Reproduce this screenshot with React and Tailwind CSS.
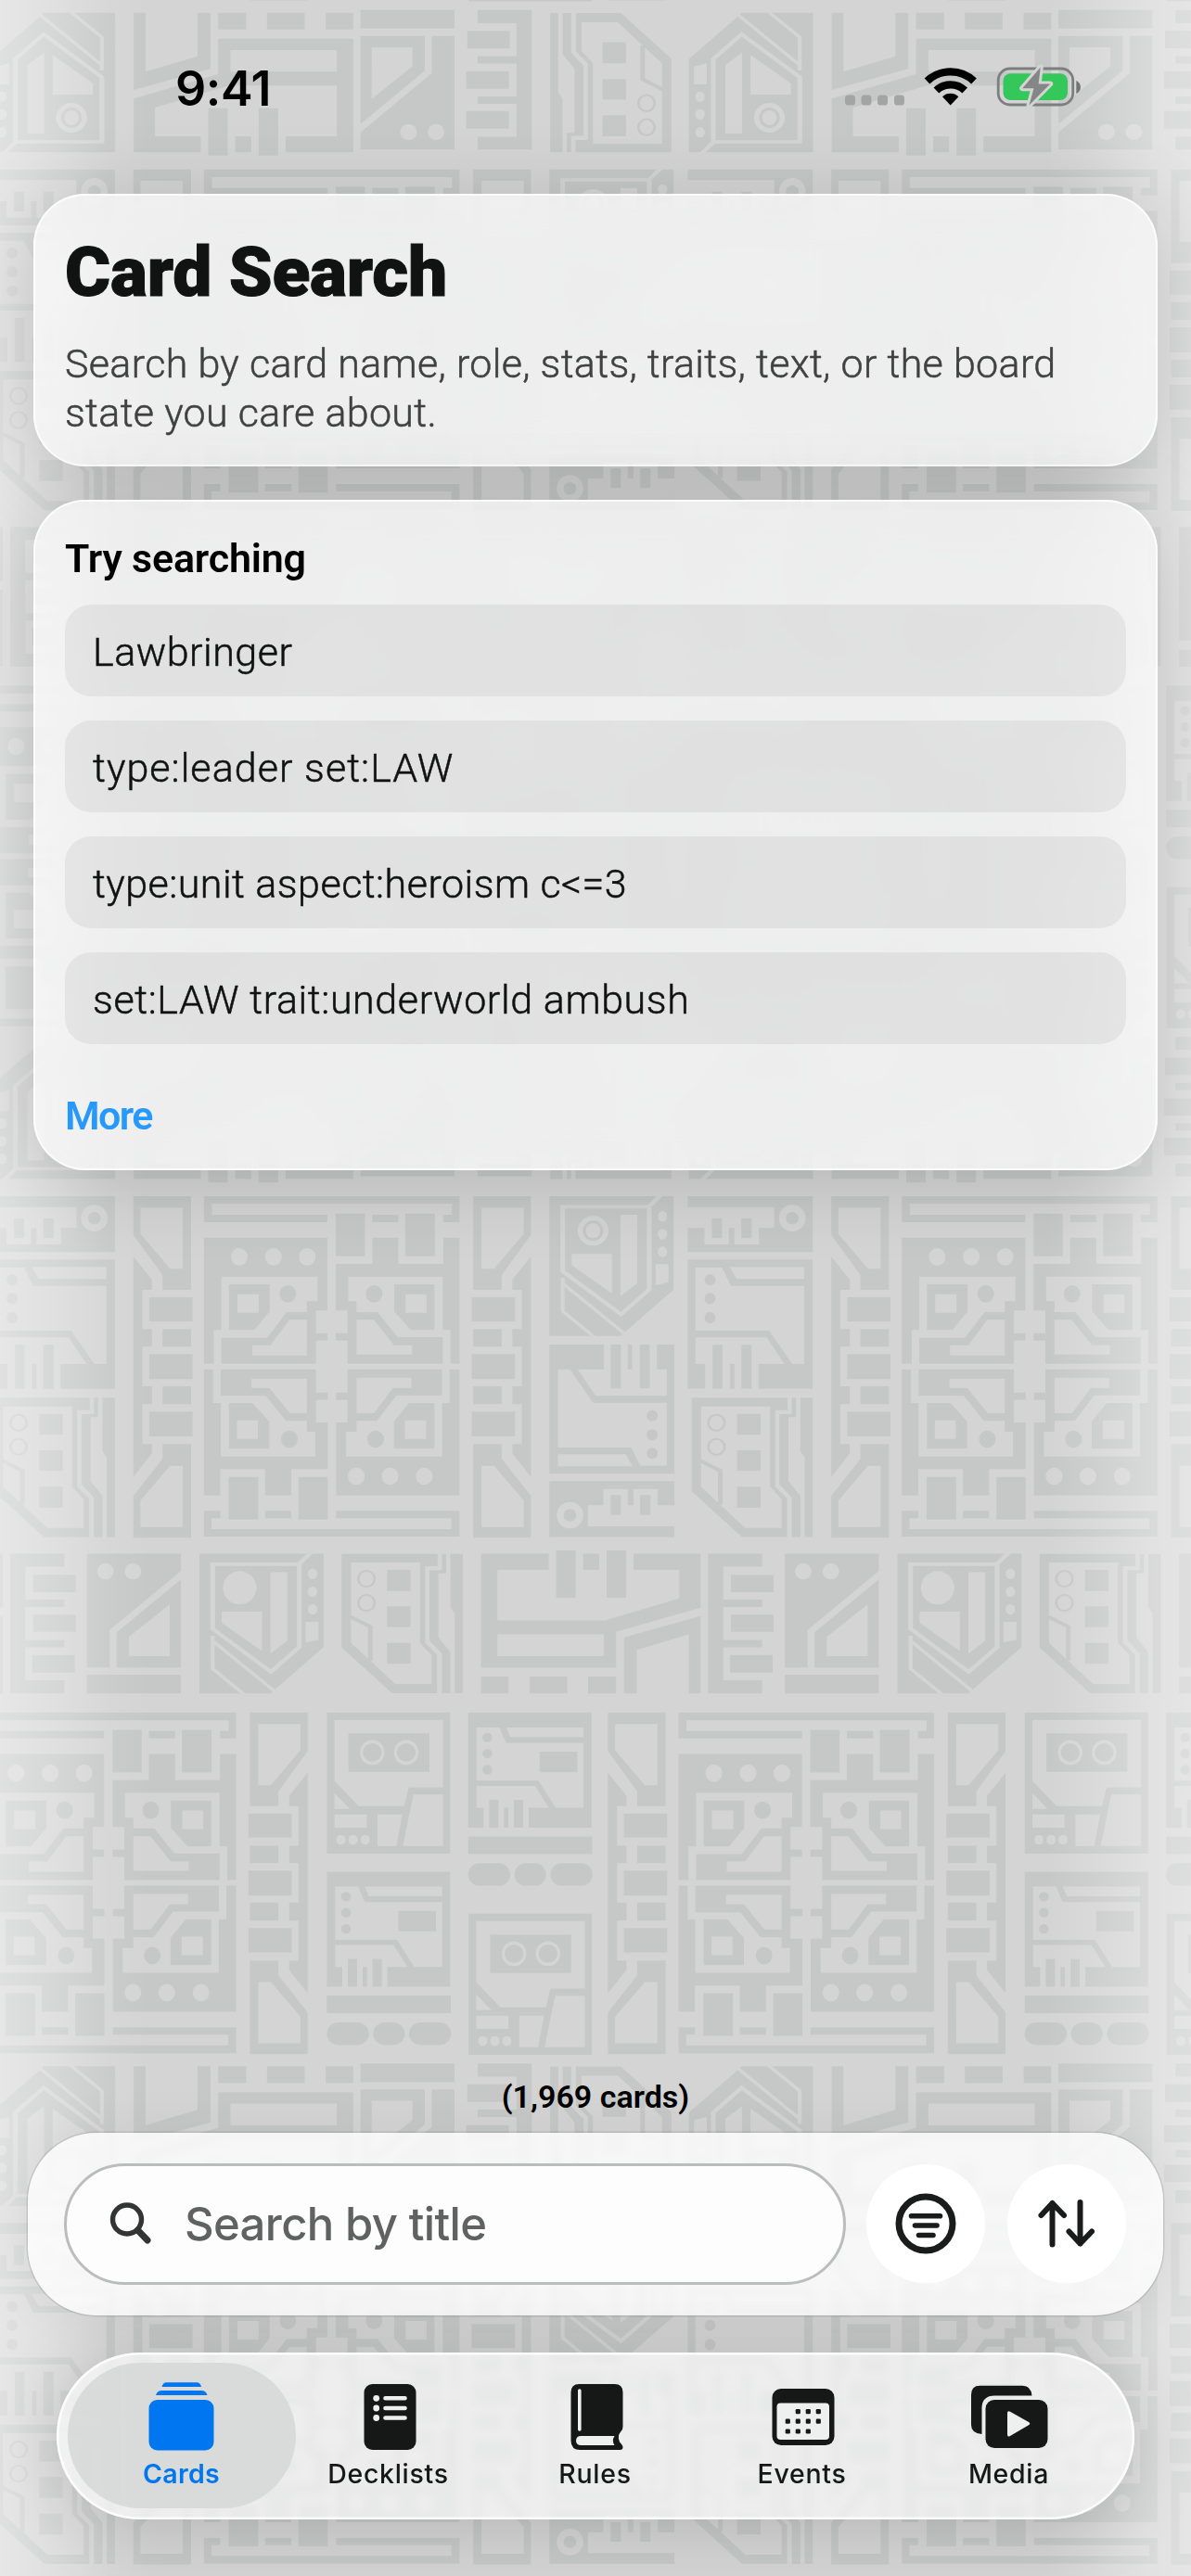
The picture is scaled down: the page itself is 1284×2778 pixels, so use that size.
import React from "react";

const D = "#c6c8c7";
const L = "#d4d4d4";

function Ladder() {
  return (
    <g fill={D}>
      <path d="M351 90H503V393H428V345L351 215Z" />
      <path fill={L} d="M370 127H481V325H448L370 212Z" />
      <path d="M351 285L400 360V393H375V520H400V577H375V705H400V763H375V892H400V922L351 998Z" />
      <path d="M393 417H507V495H393ZM428 520H503V577H428ZM393 601H507V682H393ZM428 705H503V763H428ZM393 787H507V867H393Z" />
      <path d="M351 1195H503V892H428V940L351 1060Z" />
      <path fill={L} d="M370 1160H481V962H448L370 1074Z" />
    </g>
  );
}

function HalfCore() {
  return (
    <g fill={D}>
      <path d="M537 90H1210V174H1167V150H1190V115H558V150H862V174H537Z" />
      <path d="M884 146H961V284H884ZM980 150H1049V174H980ZM1067 146H1145V284H1067Z" />
      <path d="M537 224H862V460H832V533H862V557H832V632H537Z" />
      <path fill={L} d="M583 350H836V430H808V465H755L703 548H583V633H563V523H583Z" />
      <path d="M603 375H710V463L670 523H603Z" />
      <path fill={L} d="M625 407H681V467H625ZM762 490H808V605H664V572H712Z" />
      <ellipse cx="758" cy="406" rx="22" ry="28" />
      {[630, 720, 809].map((x) => (
        <ellipse key={x} cx={x} cy="286" rx="22" ry="28" fill={L} />
      ))}
      <path d="M884 309H980V224H1049V309H1167V224H1210V632H915V557H884V533H915V460H884Z" />
      <path fill={L} d="M917 350H1166V523H1186V633H1166V546H1047L994 465H939V430H917Z" />
      <path d="M1038 375H1144V523H1082L1038 463Z" />
      <path fill={L} d="M1068 407H1123V467H1068ZM939 490H984L1038 572H1085V602H939Z" />
      <ellipse cx="985" cy="406" rx="22" ry="28" />
    </g>
  );
}

function Shield({ ring }) {
  return (
    <g transform="translate(560 1260) scale(.46173 .33333)" fill={D}>
      <path d="M70 90H360V392L248 527L236 542H70Z" />
      <path fill="none" stroke={L} strokeWidth="11" d="M332 84L302 124H101V333L237 472L303 392V124" />
      <path fill="none" stroke={L} strokeWidth="9" d="M101 355V462L175 546M101 372L250 540" />
      <path fill={L} d="M122 277H216V405L122 313ZM236 150H275V372L236 413ZM318 310H348V368L318 378Z" />
      {[155, 213, 270].map((y) => (
        <ellipse key={y} cx="334" cy={y} rx="11" ry="17" fill={L} />
      ))}
      {ring ? (
        <>
          <ellipse cx="172" cy="202" rx="36" ry="48" fill={L} />
          <ellipse cx="172" cy="202" rx="24" ry="33" />
          <ellipse cx="172" cy="202" rx="17" ry="24" fill={L} />
        </>
      ) : (
        <ellipse cx="164" cy="200" rx="39" ry="54" fill={L} />
      )}
    </g>
  );
}

function Chips() {
  return (
    <g fill={D}>
      <path d="M70 570H362V988H70Z" />
      <path fill={L} d="M90 650H118L172 758H344V962H282L261 903H90ZM90 925H248L264 964H90Z" />
      <path fill={L} d="M136 650H197V569H213V712H237V569H253V650H263V569H281V712H304V569H321V650H344V736H178Z" />
      {[800, 862, 922].map((y) => (
        <ellipse key={y} cx="310" cy={y} rx="13" ry="18" />
      ))}
      <path d="M70 1012H362V1193H70Z" />
      <path fill={L} d="M363 1090H323V1037H266V1090H253V1037H196V1090H160V1158H363Z" />
      <path d="M213 1057H237V1121H213ZM282 1057H306V1121H282Z" />
      <ellipse cx="118" cy="1122" rx="31" ry="43" fill={L} />
      <ellipse cx="118" cy="1122" rx="15" ry="20" />
    </g>
  );
}

function Tower() {
  return (
    <g transform="translate(560 1260) scale(.46173 .33333)" fill={D}>
      <path d="M402 742H626V782H597V1030L625 1068V1193H520L402 1045Z" />
      <path fill={L} d="M424 770H585V1030L612 1070V1163H527L424 1030Z" />
      <path fill="none" stroke={D} strokeWidth="11" d="M420 944L469 978V1088" />
      {[823, 901].map((y) => (
        <ellipse key={y} cx="460" cy={y} rx="19" ry="26" fill="none" stroke={D} strokeWidth="6" />
      ))}
      <path d="M508 794H563V862H508ZM508 912H563V979H508ZM508 1030H563V1098H508Z" />
      <path d="M636 742H646V805H628V1012L656 1060V1193H636V1065L607 1022V795H636Z" />
      <path d="M656 742H685V1193H666V935L656 915Z" />
    </g>
  );
}

function Comb() {
  return (
    <path
      transform="translate(0 1640) scale(.33333 .39541)"
      fill={D}
      d="M33 90H208V125H82V215H208V235H82V325H208V345H82V435H208V471H33ZM107 147H245V195H107ZM107 256H245V303H107ZM104 366H242V414H104Z"
    />
  );
}

function Wedge() {
  return (
    <g transform="translate(0 1640) scale(.33333 .39541)" fill={D}>
      <path d="M281 90H585V137L355 298V400H281ZM585 160V400H377V305ZM281 420H585V471H281Z" />
      <path fill={L} d="M417 317L549 228V369H417Z" />
      <ellipse cx="341" cy="138" rx="27" ry="22" fill={L} />
      <ellipse cx="430" cy="138" rx="27" ry="22" fill={L} />
    </g>
  );
}

function Hall() {
  return (
    <g transform="translate(460 1640) scale(.33333 .39541)" fill={D}>
      <path d="M176 90H395V134H229V272H577L817 212V134H669V90H886V237L613 303V400H176Z" />
      <path fill={L} d="M229 310H573V369H229Z" />
      <path d="M419 81H482V210H419ZM506 90H558V134H506ZM582 81H645V210H582ZM176 425H265V471H176ZM333 425H455V471H333ZM522 425H613V471H522Z" />
      <path d="M886 260V471H848V310L680 352V471H638V318Z" />
    </g>
  );
}

function Face() {
  return (
    <g transform="translate(0 1640) scale(.33333 .39541)" fill={D}>
      <path d="M1057 523H1456V908H1057Z" />
      <path fill={L} d="M1082 543H1433V727H1322L1307 778H1160L1082 710ZM1082 743L1131 786H1082ZM1082 801H1186V837H1082ZM1221 801H1301L1282 887H1221ZM1337 747H1433V887H1303Z" />
      <path d="M1127 580H1389V685H1127Z" />
      {[1204, 1314].map((x) => (
        <ellipse key={x} cx={x} cy="632" rx="35" ry="29.5" fill="none" stroke={L} strokeWidth="9" />
      ))}
      {[1103, 1142, 1181].map((x) => (
        <ellipse key={x} cx={x} cy="870" rx="15" ry="13" fill={L} />
      ))}
    </g>
  );
}

function Panel() {
  return (
    <g transform="translate(0 1640) scale(.33333 .39541)" fill={D}>
      <path d="M1057 957H1456V1271H1057Z" />
      <path fill={L} d="M1084 998H1158L1180 1040H1430V1217H1340L1284 1143H1084ZM1180 998H1430V1024H1193Z" />
      <path fill={L} d="M1084 1157H1273L1318 1217H1253V1272H1235V1195H1205V1272H1187V1217H1173V1272H1155V1195H1125V1272H1107V1217H1084Z" />
      {[1025, 1069, 1113].map((y) => (
        <ellipse key={y} cx="1119" cy={y} rx="16" ry="13" />
      ))}
      <path d="M1288 1064H1410V1120H1288ZM1057 1295H1458V1343H1057Z" />
      <rect x="1057" y="1368" width="136" height="62" rx="37" ry="31" />
      <rect x="1207" y="1368" width="102" height="62" rx="37" ry="31" />
      <rect x="1323" y="1368" width="136" height="62" rx="37" ry="31" />
    </g>
  );
}

function Core() {
  return (
    <g transform="translate(0 1260) scale(.40944 .33333)">
      <Ladder />
      <g transform="translate(1749 0) scale(-1 1)">
        <Ladder />
      </g>
      <HalfCore />
      <g transform="rotate(180 873.5 641)">
        <HalfCore />
      </g>
    </g>
  );
}

function Backdrop() {
  const cells = [];
  for (let r = -2; r <= 2; r++) for (let c = -1; c <= 1; c++) cells.push([c * 752.4, r * 1107.3]);
  return (
    <svg className="absolute inset-0 size-full" viewBox="0 0 1284 2778">
      <defs>
        <g id="tile">
          <Core />
          <Shield ring />
          <g transform="translate(560 1260) scale(.46173 .33333)">
            <Chips />
            <g transform="rotate(180 377.5 641.5)">
              <Chips />
            </g>
          </g>
          <Tower />

          <Comb />
          <Wedge />
          <g transform="translate(-377.3 385.6)">
            <Shield />
          </g>
          <g transform="translate(-377.3 168.3)">
            <Tower />
          </g>
          <Hall />

          <g transform="translate(511.7 556.8)">
            <Core />
          </g>
          <Face />
          <Panel />
          <g transform="translate(152.4 -171.6)">
            <Panel />
          </g>
          <g transform="translate(152.8 217)">
            <Face />
          </g>

          <g transform="translate(1469.4 1671.6) rotate(180)">
            <Tower />
          </g>
          <g transform="translate(1468.9 1454.3) rotate(180)">
            <Shield ring />
          </g>
          <g transform="translate(899.5 1839.9) rotate(180)">
            <Hall />
          </g>
          <g transform="translate(583.7 1836.9) rotate(180)">
            <Wedge />
          </g>
          <g transform="translate(584.3 1836.9) rotate(180)">
            <Comb />
          </g>
        </g>
        <linearGradient id="edge">
          <stop offset="0" stopColor="#fff" stopOpacity=".44" />
          <stop offset=".05" stopColor="#fff" stopOpacity=".26" />
          <stop offset=".09" stopColor="#fff" stopOpacity=".08" />
          <stop offset=".125" stopColor="#fff" stopOpacity="0" />
          <stop offset=".88" stopColor="#fff" stopOpacity="0" />
          <stop offset=".92" stopColor="#fff" stopOpacity=".14" />
          <stop offset=".965" stopColor="#fff" stopOpacity=".32" />
          <stop offset="1" stopColor="#fff" stopOpacity=".4" />
        </linearGradient>
      </defs>
      <rect width="1284" height="2778" fill={L} />
      {cells.map(([x, y]) => (
        <use key={`${x}/${y}`} href="#tile" x={x} y={y} />
      ))}
      <rect width="1284" height="2778" fill="url(#edge)" />
    </svg>
  );
}

function StatusBar() {
  return (
    <header className="flex h-[209px] shrink-0 items-start justify-between pl-[189px] pr-[116px] pt-[64px]">
      <span className="pt-[1px] font-['Inter'] text-[52px] font-semibold leading-[62px] tracking-[-0.4px] text-black">9:41</span>
      <svg width="258" height="50" viewBox="910 68 258 50" className="mt-[4px]">
        {[911, 928.5, 946, 964].map((x) => (
          <rect key={x} x={x} y="102.5" width="11" height="11" rx="3.6" fill="#a3a4a4" />
        ))}
        <g fill="none" stroke="#000" strokeWidth="8.2">
          <path d="M999.5 87.5A36.5 36.5 0 0 1 1050 87.5" />
          <path d="M1009.4 97.5A22.2 22.2 0 0 1 1040.2 97.5" />
        </g>
        <path d="M1024.7 113.5L1016 104.2A13 13 0 0 1 1033.4 104.2Z" />
        <rect x="1076.2" y="74" width="80.5" height="39" rx="12.5" fill="none" stroke="#7d7e7e" strokeWidth="2.8" />
        <rect x="1081.5" y="79.2" width="69.5" height="28.8" rx="8" fill="#34c759" />
        <path d="M1160.3 87V101C1166.5 98.5 1166.5 89.5 1160.3 87Z" fill="#737474" />
        <path
          d="M1121.8 72.5L1102.2 95.2H1114.5L1109.5 113.5L1132.2 90.5H1119.6Z"
          fill="#858786"
          stroke="#d4d4d4"
          strokeWidth="6"
          strokeLinejoin="round"
          paintOrder="stroke"
        />
      </svg>
    </header>
  );
}

const suggestions = [
  ["Lawbringer", "tracking-[0.5px]"],
  ["type:leader set:LAW", "tracking-[1.05px]"],
  ["type:unit aspect:heroism c<=3", "tracking-[0.47px]"],
  ["set:LAW trait:underworld ambush", "tracking-[0.6px]"],
];

const glass =
  "rounded-[56px] bg-white/65 backdrop-blur-[22px] shadow-[0_12px_90px_rgba(0,0,0,0.15),inset_0_0_0_2px_rgba(255,255,255,0.75)]";

const tabs = [
  {
    label: "Cards",
    view: "150.5 2560 90 90",
    icon: (
      <g fill="#0077f0">
        <rect x="160" y="2588" width="70" height="54.4" rx="9" />
        <path d="M167.5 2583Q169 2578 174 2578H216.500Q221.500 2578 223 2583Z" />
        <path d="M174 2574Q175 2569.200 179 2569.200H211.500Q215.500 2569.200 216.500 2574Z" />
      </g>
    ),
  },
  {
    label: "Decklists",
    view: "373.5 2560 90 90",
    icon: (
      <g>
        <rect x="392" y="2571" width="56" height="71" rx="9" fill="#161717" />
        <g stroke="#eef0ef" strokeLinecap="round" strokeWidth="4.6">
          <path d="M415 2586.300H436M415 2597H436M415 2607.500H436" />
        </g>
        <g fill="#eef0ef">
          <circle cx="405.200" cy="2586.300" r="3.400" />
          <circle cx="405.200" cy="2597" r="3.400" />
          <circle cx="405.200" cy="2607.500" r="3.400" />
        </g>
      </g>
    ),
  },
  {
    label: "Rules",
    view: "596.5 2560 90 90",
    icon: (
      <g>
        <path d="M624 2571H662Q671 2571 671 2580V2617Q671 2620 669 2622Q664.500 2627 667.500 2633.500Q671 2637 671 2639Q671 2642 668 2642H625Q615 2642 615 2632V2580Q615 2571 624 2571Z" fill="#161717" />
        <path d="M624.300 2578V2620" stroke="#eef0ef" strokeWidth="3.600" strokeLinecap="round" />
        <path d="M662 2627H626Q620.500 2627 620.500 2632.200Q620.500 2637 626 2637H662Q658.800 2632 662 2627Z" fill="#eef0ef" />
      </g>
    ),
  },
  {
    label: "Events",
    view: "819.5 2560 90 90",
    icon: (
      <g>
        <rect x="832" y="2576" width="67" height="61" rx="9.500" fill="#161717" />
        <rect x="837" y="2591.500" width="56.500" height="39.500" rx="4" fill="#eef0ef" />
        <g fill="#161717">
          {[
            [857.2, 2598], [868.2, 2598], [879.2, 2598],
            [846.2, 2608.6], [857.2, 2608.6], [868.2, 2608.6], [879.2, 2608.6],
            [846.2, 2619.4], [857.2, 2619.4], [868.2, 2619.4],
          ].map(([x, y]) => (
            <rect key={`${x}-${y}`} x={x} y={y} width="5.200" height="5.200" rx="1.300" />
          ))}
        </g>
      </g>
    ),
  },
  {
    label: "Media",
    view: "1042.5 2560 90 90",
    icon: (
      <g fill="#161717">
        <path d="M1056 2572.800H1102Q1111 2572.800 1112 2583.500H1072Q1058 2583.500 1058 2597V2625Q1046.500 2624 1046.500 2615V2582.500Q1046.500 2572.800 1056 2572.800Z" />
        <rect x="1062" y="2588" width="67" height="52" rx="9.500" />
        <path d="M1085.500 2602.500Q1085.500 2599 1088.500 2600.700L1108.500 2612Q1111 2613.600 1108.500 2615.200L1088.500 2627Q1085.500 2628.700 1085.500 2625.500Z" fill="#eef0ef" />
      </g>
    ),
  },
];

export default function App() {
  return (
    <div className="relative h-[2778px] w-[1284px] overflow-hidden bg-[#d4d4d4] font-['Roboto',sans-serif]">
      <Backdrop />
      <div className="relative flex h-full flex-col">
        <StatusBar />

        <main className="flex flex-1 flex-col px-[36px]">
          <section className={`h-[294px] px-[34px] pt-[39px] ${glass}`}>
            <h1 className="whitespace-nowrap text-[75px] font-black leading-[90px] tracking-[-0.2px] text-[#111212] [-webkit-text-stroke:1px_#111212]">Card Search</h1>
            <p className="mt-[28px] whitespace-nowrap text-[43px] font-light leading-[53px] tracking-[0.32px] text-[#404141] [-webkit-text-stroke:0.5px_#404141]">
              Search by card name, role, stats, traits, text, or the board
              <br />
              state you care about.
            </p>
          </section>

          <section className={`mt-[36px] h-[723px] px-[34px] pt-[36px] ${glass}`}>
            <h2 className="text-[43px] font-semibold leading-[54px] tracking-[-0.2px] text-black">Try searching</h2>
            <ul className="mt-[23px] flex flex-col gap-[26.300px]">
              {suggestions.map(([text, spacing]) => (
                <li key={text} className="flex h-[98.700px] items-center rounded-[28px] bg-black/[0.055] px-[30px]">
                  <span className={`whitespace-nowrap pt-[3px] text-[43px] font-light text-[#111212] [-webkit-text-stroke:0.5px_#111212] ${spacing}`}>{text}</span>
                </li>
              ))}
            </ul>
            <button className="mt-[50px] block text-[43px] font-semibold leading-[54px] tracking-[-1.6px] text-[#2899fc]">More</button>
          </section>

          <p className="mt-auto pb-[18px] text-center text-[34px] font-semibold leading-[42px] text-black">(1,969 cards)</p>
        </main>

        <section className="mx-[30px] flex h-[197.500px] items-center rounded-[74px] bg-white/80 pl-[39px] shadow-[0_0_60px_rgba(0,0,0,0.06),0_0_0_1.500px_rgba(0,0,0,0.11)] backdrop-blur-[3px]">
          <div className="flex h-[131px] w-[843px] shrink-0 items-center rounded-full border-[3px] border-[#bbbcbc] bg-[#fdfdfd] pl-[44px]">
            <svg width="50" height="50" viewBox="0 0 50 50" fill="none" stroke="#333434" strokeLinecap="round">
              <circle cx="21" cy="20.500" r="15.500" strokeWidth="5.400" />
              <path d="M32.500 32L43 43" strokeWidth="7" />
            </svg>
            <span className="pl-[33px] font-['Inter'] text-[49px] font-[450] tracking-[-0.650px] text-[#606161]">Search by title</span>
          </div>
          <button className="ml-[22px] flex size-[128px] items-center justify-center rounded-full bg-white">
            <svg width="68" height="68" viewBox="0 0 68 68" fill="none" stroke="#1a1b1b" strokeLinecap="round">
              <circle cx="34" cy="34" r="29" strokeWidth="7" />
              <path d="M18.500 25.800H49.500M22.500 36H46M26.500 46.500H42" strokeWidth="5.600" />
            </svg>
          </button>
          <button className="ml-[24px] flex size-[128px] items-center justify-center rounded-full bg-white">
            <svg width="68" height="68" viewBox="0 0 68 68" fill="none" stroke="#1a1b1b" strokeLinecap="round" strokeLinejoin="round" strokeWidth="6">
              <path d="M18.500 12V56.500M6.500 25L18.500 12L31 25M48.500 11V55.500M36.500 42.500L48.500 55.500L61 42.500" />
            </svg>
          </button>
        </section>

        <nav className="mx-[61px] mb-[61px] mt-[40px] flex h-[180px] rounded-full bg-white/60 pl-[23px] shadow-[0_8px_80px_rgba(0,0,0,0.15),inset_0_0_0_2.500px_rgba(255,255,255,0.8)] backdrop-blur-[4px]">
          {tabs.map((tab, i) => (
            <div key={tab.label} className="relative flex w-[223px] flex-col items-center">
              {i === 0 && <div className="absolute -left-[11px] top-[11px] h-[157px] w-[246px] rounded-full bg-[#d8d9d9]/95" />}
              <svg className="relative mt-[23px]" width="90" height="90" viewBox={tab.view}>
                {tab.icon}
              </svg>
              <span
                className={
                  i === 0
                    ? "relative font-['Inter'] text-[28.500px] font-semibold leading-[36px] tracking-[0.3px] text-[#0077f0]"
                    : "relative font-['Inter'] text-[28.500px] font-medium leading-[36px] tracking-[0.7px] text-[#161717]"
                }
              >
                {tab.label}
              </span>
            </div>
          ))}
        </nav>
      </div>
    </div>
  );
}
